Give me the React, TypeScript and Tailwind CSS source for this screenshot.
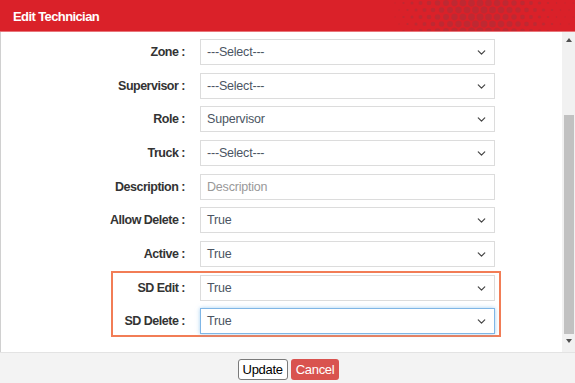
import { ChevronDown } from "lucide-react";

type Row = {
  label: string;
  value: string;
  kind?: "select" | "input";
  placeholder?: boolean;
  focused?: boolean;
  mt: string;
};

const rows: Row[] = [
  { label: "Zone", value: "---Select---", mt: "mt-0" },
  { label: "Supervisor", value: "---Select---", mt: "mt-[8px]" },
  { label: "Role", value: "Supervisor", mt: "mt-[7px]" },
  { label: "Truck", value: "---Select---", mt: "mt-[8px]" },
  { label: "Description", value: "Description", kind: "input", placeholder: true, mt: "mt-[8px]" },
  { label: "Allow Delete", value: "True", mt: "mt-[7px]" },
  { label: "Active", value: "True", mt: "mt-[8px]" },
];

const highlighted: Row[] = [
  { label: "SD Edit", value: "True", mt: "mt-0" },
  { label: "SD Delete", value: "True", focused: true, mt: "mt-[7px]" },
];

function Field({ row, labelW }: { row: Row; labelW: string }) {
  return (
    <div className={`flex h-[26px] items-center ${row.mt}`}>
      <div
        className={`${labelW} shrink-0 pr-[15px] text-right text-[12.5px] font-bold tracking-[-0.5px] text-[#333]`}
      >
        {row.label} :
      </div>
      <div
        className={`flex h-[26px] w-[295px] items-center justify-between border pl-[6px] pr-[6px] text-[12.5px] tracking-[-0.2px] ${
          row.focused
            ? "border-[#7fb6e6] shadow-[0_0_4px_rgba(102,175,233,0.6)]"
            : "border-[#dcdcdc]"
        } ${row.placeholder ? "text-[#999]" : "text-[#4b5563]"}`}
      >
        <span>{row.value}</span>
        {row.kind !== "input" && <ChevronDown className="h-[13px] w-[13px] text-[#444]" strokeWidth={2.2} />}
      </div>
    </div>
  );
}

function Dots() {
  const dots = [];
  for (let c = 0; c < 22; c++) {
    for (let r = 0; r < 5; r++) {
      const x = 395 + c * 8.5 + (r % 2) * 4;
      const y = 3 + r * 7;
      const t = c / 21;
      const size = 2.8 * Math.sin(Math.PI * Math.min(1, t * 1.1)) + 0.6;
      dots.push(<circle key={`${c}-${r}`} cx={x} cy={y} r={size} fill="#a8323a" opacity={0.55} />);
    }
  }
  return (
    <svg className="absolute right-0 top-0" width="575" height="31" viewBox="0 0 575 31">
      {dots}
    </svg>
  );
}

export default function App() {
  return (
    <div className="flex h-[383px] w-[575px] flex-col overflow-hidden bg-white font-['Liberation_Sans',Arial,sans-serif]">
      <div className="relative h-[32px] shrink-0 border-b border-[#e8757a] bg-[#da2129]">
        <Dots />
        <div className="relative pl-[13px] pt-[7px] text-[13px] font-bold tracking-[-0.6px] text-white">
          Edit Technician
        </div>
      </div>

      <div className="flex h-[320px] shrink-0 border-l border-[#d0d0d0]">
        <div className="flex-1 pt-[7px]">
          {rows.map((r) => (
            <Field key={r.label} row={r} labelW="w-[199px]" />
          ))}
          <div className="ml-[110px] mt-[4px] w-[390px] border-2 border-[#f27d56] pb-[1px] pt-[2px]">
            {highlighted.map((r) => (
              <Field key={r.label} row={r} labelW="w-[87px]" />
            ))}
          </div>
        </div>
        <div className="flex w-[13px] shrink-0 flex-col items-center bg-[#f1f1f1]">
          <div className="mt-[6px] h-0 w-0 border-x-[3.5px] border-b-[4px] border-x-transparent border-b-[#505050]" />
          <div className="mt-[73px] h-[219px] w-[10px] bg-[#c1c1c1]" />
          <div className="mt-[5px] h-0 w-0 border-x-[3.5px] border-t-[4px] border-x-transparent border-t-[#505050]" />
        </div>
      </div>

      <div className="flex flex-1 items-start justify-center gap-[3px] border-t border-[#e3e3e3] bg-[#f3f3f3] pt-[6px]">
        <button className="ml-[2px] h-[21px] rounded-[3px] border border-[#7a7a7a] bg-white px-[4px] text-[13px] tracking-[-0.3px] text-black">
          Update
        </button>
        <button className="h-[21px] rounded-[3px] bg-[#d9534f] px-[5px] text-[13px] tracking-[-0.3px] text-white">
          Cancel
        </button>
      </div>
    </div>
  );
}
